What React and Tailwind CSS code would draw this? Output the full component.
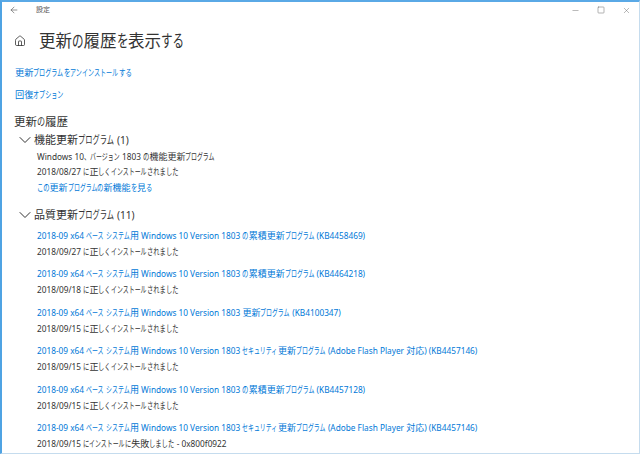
import { ArrowLeft, Home, ChevronDown, Minus, Square, X } from 'lucide-react';

const qualityUpdates = [
  { title: '2018-09 x64 ベース システム用 Windows 10 Version 1803 の累積更新プログラム (KB4458469)', status: '2018/09/27 に正しくインストールされました' },
  { title: '2018-09 x64 ベース システム用 Windows 10 Version 1803 の累積更新プログラム (KB4464218)', status: '2018/09/18 に正しくインストールされました' },
  { title: '2018-09 x64 ベース システム用 Windows 10 Version 1803 更新プログラム (KB4100347)', status: '2018/09/15 に正しくインストールされました' },
  { title: '2018-09 x64 ベース システム用 Windows 10 Version 1803 セキュリティ更新プログラム (Adobe Flash Player 対応) (KB4457146)', status: '2018/09/15 に正しくインストールされました' },
  { title: '2018-09 x64 ベース システム用 Windows 10 Version 1803 の累積更新プログラム (KB4457128)', status: '2018/09/15 に正しくインストールされました' },
  { title: '2018-09 x64 ベース システム用 Windows 10 Version 1803 セキュリティ更新プログラム (Adobe Flash Player 対応) (KB4457146)', status: '2018/09/15 にインストールに失敗しました - 0x800f0922' },
];

// the reference font has narrow kana, so kana runs get squeezed horizontally
function Jp({ children }) {
  const runs = children.match(/[\u30A0-\u30FF]+|[\u3040-\u309F\u3001]+|[\u4E00-\u9FFF]+|[^\u3001\u3040-\u30FF\u4E00-\u9FFF]+/g);
  return runs.map((run, i) => {
    if (/^[\u30A0-\u30FF]/.test(run)) {
      return (
        <span key={i} className="inline-block" style={{ width: `${run.length * 0.66}em` }}>
          <span className="inline-block origin-left scale-x-[.66] whitespace-nowrap">{run}</span>
        </span>
      );
    }
    if (/^[\u3040-\u309F\u3001]/.test(run)) {
      return (
        <span key={i} className="inline-block" style={{ width: `${run.length * 0.7}em` }}>
          <span className="inline-block origin-left scale-x-[.7] whitespace-nowrap">{run}</span>
        </span>
      );
    }
    if (/^[\u4E00-\u9FFF]/.test(run)) return <span key={i}>{run}</span>;
    return <span key={i} className="text-[.92em]">{run}</span>;
  });
}

function GroupHeading({ children }) {
  return (
    <div className="flex h-[16px] items-center">
      <ChevronDown className="ml-[13px] h-[20px] w-[20px] text-[#333]" strokeWidth={1.2} />
      <span className="ml-[-1px] whitespace-nowrap text-[11px] text-[#333]"><Jp>{children}</Jp></span>
    </div>
  );
}

function App() {
  return (
    <div className="h-[454px] w-[640px] overflow-hidden border-t-2 border-r border-b border-l-2 border-t-[#5aa9e6] border-r-[#c5dcee] border-b-[#c5dcee] border-l-[#4fa3e3] bg-white font-['Noto_Sans','Noto_Sans_CJK_JP',sans-serif] text-[#333]">
      <div className="flex h-[16px] items-center">
        <ArrowLeft className="ml-[7px] h-[10px] w-[10px] text-[#555]" strokeWidth={1.5} />
        <span className="ml-[17px] text-[7px] text-[#555]">設定</span>
        <div className="ml-auto flex items-center gap-[17px] pr-[8px] text-[#666]">
          <Minus className="h-[9px] w-[9px]" strokeWidth={1.2} />
          <Square className="h-[8px] w-[8px]" strokeWidth={1.5} />
          <X className="h-[9px] w-[9px]" strokeWidth={1.2} />
        </div>
      </div>

      <div className="mt-[11px] flex h-[24px] items-center">
        <Home className="ml-[12px] h-[12px] w-[12px] text-[#333]" strokeWidth={1.6} />
        <h1 className="ml-[13px] whitespace-nowrap text-[16.5px] font-normal leading-none text-[#333]"><Jp>更新の履歴を表示する</Jp></h1>
      </div>

      <div className="mt-[13px] ml-[13px] whitespace-nowrap text-[9.2px] text-[#0078d7]"><Jp>更新プログラムをアンインストールする</Jp></div>
      <div className="mt-[8px] ml-[13px] whitespace-nowrap text-[9.2px] text-[#0078d7]"><Jp>回復オプション</Jp></div>

      <div className="mt-[11px] ml-[12px] whitespace-nowrap text-[11.5px] text-[#333]"><Jp>更新の履歴</Jp></div>
      <div className="mt-[2px]">
        <GroupHeading>機能更新プログラム (1)</GroupHeading>
      </div>

      <div className="mt-[2px] ml-[35px] flex flex-col gap-[2px] whitespace-nowrap text-[9px]">
        <div><Jp>Windows 10、バージョン 1803 の機能更新プログラム</Jp></div>
        <div><Jp>2018/08/27 に正しくインストールされました</Jp></div>
        <div className="text-[#0078d7]"><Jp>この更新プログラムの新機能を見る</Jp></div>
      </div>

      <div className="mt-[13px]">
        <GroupHeading>品質更新プログラム (11)</GroupHeading>
      </div>

      <div className="mt-[5.5px] ml-[35px] flex flex-col gap-[9px] text-[9px]">
        {qualityUpdates.map((item, i) => (
          <div key={i} className="flex flex-col gap-[2.5px]">
            <div className="whitespace-nowrap text-[#0078d7]"><Jp>{item.title}</Jp></div>
            <div className="whitespace-nowrap"><Jp>{item.status}</Jp></div>
          </div>
        ))}
      </div>
    </div>
  );
}

export default App;
